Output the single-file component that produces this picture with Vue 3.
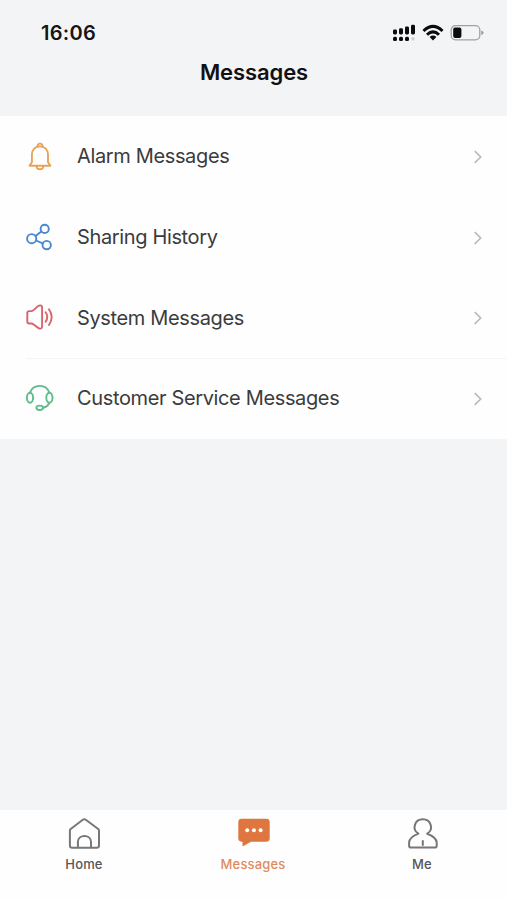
<script setup>
const rows = [
  { id: 'alarm', label: 'Alarm Messages' },
  { id: 'share', label: 'Sharing History' },
  { id: 'system', label: 'System Messages' },
  { id: 'service', label: 'Customer Service Messages' },
]
</script>

<template>
  <div class="screen">
    <header class="header">
      <div class="status">
        <span class="time">16:06</span>
        <div class="indicators">
          <svg class="signal" width="24" height="18" viewBox="0 0 24 18">
            <g fill="#0b0b0d">
              <rect x="1" y="5.4" width="4" height="5" rx="1.4" />
              <rect x="7" y="4.2" width="4" height="6.2" rx="1.4" />
              <rect x="13" y="2.6" width="4" height="7.8" rx="1.4" />
              <rect x="19" y="0.8" width="4" height="9.6" rx="1.4" />
              <rect x="1" y="12.7" width="4" height="4.2" rx="1.5" />
              <rect x="7" y="12.7" width="4" height="4.2" rx="1.5" />
              <rect x="13" y="12.7" width="4" height="4.2" rx="1.5" />
            </g>
            <rect x="19.3" y="12.9" width="3.4" height="3.6" rx="1.5" fill="#cfd0d2" />
          </svg>
          <svg class="wifi" width="22" height="18" viewBox="0 0 22 18">
            <g fill="none" stroke="#0b0b0d" stroke-width="3">
              <path d="M1.5 7 Q11 -2.2 20.5 7" />
              <path d="M5 10.8 Q11 4.9 17 10.8" />
            </g>
            <path d="M7.6 13 Q11 10.2 14.4 13 L11 16.5Z" fill="#0b0b0d" />
          </svg>
          <svg class="battery" width="34" height="18" viewBox="0 0 34 18">
            <rect x="1.2" y="1.7" width="28.6" height="14.2" rx="4.4" fill="none" stroke="#a0a1a3" stroke-width="1.3" />
            <rect x="3.2" y="3.6" width="8.2" height="10.5" rx="2" fill="#0b0b0d" />
            <path d="M31.3 6.4Q33.6 7.3 33.6 8.8T31.3 11.2Z" fill="#97989a" />
          </svg>
        </div>
      </div>
      <h1 class="title">Messages</h1>
    </header>

    <main class="list">
      <div v-for="row in rows" :key="row.id" class="row" :class="row.id">
        <svg class="icon" width="30" height="30" viewBox="0 0 30 30">
          <g v-if="row.id === 'alarm'">
            <path d="M5.5 23.8H26.4L24 20.2V12.6C24 7.6 20.6 4.4 16 4.4S7.9 7.6 7.9 12.6V20.2Z" />
            <path d="M13.4 4.5C13.4 .7 18.6 .7 18.6 4.5M12.5 24.2C12.8 28.3 19.1 28.3 19.4 24.2" />
          </g>
          <g v-else-if="row.id === 'share'">
            <circle cx="20.7" cy="5.9" r="4.1" />
            <circle cx="7.7" cy="15.7" r="4.6" />
            <circle cx="22.7" cy="22.1" r="4.2" />
            <path d="M11.5 13L17.4 8.4M12 17.5L18.8 20.4" />
          </g>
          <g v-else-if="row.id === 'system'">
            <path d="M5.2 8.1H7.8C10 7.6 12.5 3.8 15 2.7C16.8 2 18.1 2.6 18.1 4.5V23.2C18.1 25.6 16.7 26.2 14.6 25.2C12.3 24 10.2 21.2 7.8 20.5H5.2Q3.3 20.5 3.3 18.6V10Q3.3 8.1 5.2 8.1Z" />
            <path d="M21.6 9.3Q25 14 21.6 18.8M25 6.2Q30.4 14 25 22" />
          </g>
          <g v-else>
            <ellipse cx="6" cy="13.8" rx="3.1" ry="5" />
            <ellipse cx="25.4" cy="13.8" rx="3.1" ry="5" />
            <path d="M6 8.7C7.5 4.6 11 1.9 15.7 1.9S23.9 4.6 25.4 8.7M25.2 18.9Q24 22.8 19 23.7" />
            <ellipse cx="15.7" cy="23.8" rx="3.3" ry="2.2" />
          </g>
        </svg>
        <span class="label">{{ row.label }}</span>
        <svg class="chevron" width="10" height="14" viewBox="0 0 10 14">
          <path d="M1.7 1.2L7.7 7L1.7 12.8" />
        </svg>
      </div>
    </main>

    <nav class="tabs">
      <div class="tab">
        <svg width="36" height="34" viewBox="0 0 36 34">
          <path d="M3.9 12.7Q3.9 11.7 4.7 11L16.8 1.7Q18.3.6 19.8 1.7L32.2 11Q33 11.7 33 12.7V27.4Q33 29.7 30.7 29.7H6.2Q3.9 29.7 3.9 27.4ZM11.9 29.5V24C11.9 16 25 16 25 24V29.5" />
        </svg>
        <span>Home</span>
      </div>
      <div class="tab active">
        <svg width="36" height="34" viewBox="0 0 36 34">
          <path class="bubble" d="M6.7 .7H31.3Q34.7 .7 34.7 4.1V20.3Q34.7 23.7 31.3 23.7H16L8.5 28.1Q7.5 28.6 7.5 27.3V23.7H7Q3.3 23.7 3.3 20.3V4.1Q3.3 .7 6.7 .7Z" />
          <g class="dots"><circle cx="12.2" cy="12.3" r="2" /><circle cx="18.9" cy="12.3" r="2" /><circle cx="25.6" cy="12.3" r="2" /></g>
        </svg>
        <span>Messages</span>
      </div>
      <div class="tab">
        <svg width="36" height="34" viewBox="0 0 36 34">
          <path d="M14.4 15.7C7.6 11.5 10.5 1.2 18.8 1.2S30 11.5 23.2 15.7C27.5 17.4 32.7 20.5 32.7 24.5V27.8Q32.7 29.6 30.9 29.6H6.9Q5.1 29.6 5.1 27.8V24.5C5.1 20.5 10.3 17.4 14.4 15.7ZM18.8 23V27" />
        </svg>
        <span>Me</span>
      </div>
    </nav>
  </div>
</template>

<style>
body { margin: 0; }
</style>

<style scoped>
.screen {
  width: 507px;
  height: 900px;
  display: flex;
  flex-direction: column;
  background: #f3f4f6;
  font-family: Inter, "Liberation Sans", sans-serif;
  overflow: hidden;
}
.header { height: 116px; }
.status {
  display: flex;
  justify-content: space-between;
  align-items: center;
  height: 34px;
  padding: 16px 23px 0 41px;
}
.time { font-size: 20px; font-weight: 600; letter-spacing: 0.3px; color: #151517; line-height: 34px; }
.indicators { display: flex; align-items: center; gap: 6px; }
.title {
  margin: 7px 0 0;
  padding-left: 1px;
  text-align: center;
  font-size: 22px;
  line-height: 30px;
  font-weight: 600;
  letter-spacing: -0.1px;
  color: #111113;
}
.list {
  height: 323px;
  display: grid;
  grid-template-rows: 81px 81px 80px 81px;
  background: #fefefe;
}
.row { display: flex; align-items: center; padding: 0 24px; }
.icon { flex: none; margin-right: 23px; }
.icon g { fill: none; stroke-width: 1.9; stroke-linecap: round; stroke-linejoin: round; }
.alarm .icon { stroke: #e7a35a; }
.share .icon { stroke: #4a87d3; }
.system .icon { stroke: #d9646b; }
.service .icon { stroke: #5abd8a; }
.service { background: linear-gradient(#f4f4f5, #f4f4f5) 26px 0 / 481px 1px no-repeat; }
.label {
  flex: 1;
  padding-bottom: 1px;
  font-size: 20px;
  line-height: 28px;
  letter-spacing: -0.36px;
  color: #3b3b3d;
  white-space: nowrap;
}
.chevron { fill: none; stroke: #b9b9bb; stroke-width: 1.6; }
.tabs {
  display: grid;
  grid-template-columns: repeat(3, 169px);
  height: 90px;
  margin-top: auto;
  background: #fefefe;
}
.tab {
  display: flex;
  flex-direction: column;
  align-items: center;
  padding: 8px 1px 0 0;
  color: #565658;
  font-size: 13px;
  font-weight: 500;
  letter-spacing: 0.15px;
}
.tab svg { fill: none; stroke: #77777a; stroke-width: 2; stroke-linejoin: round; stroke-linecap: round; }
.tab span { line-height: 16px; margin-top: 4px; }
.tab.active { color: #df8b5e; }
.tab .bubble { fill: #e0763f; stroke: none; }
.tab .dots { fill: #fff; stroke: none; }
</style>
